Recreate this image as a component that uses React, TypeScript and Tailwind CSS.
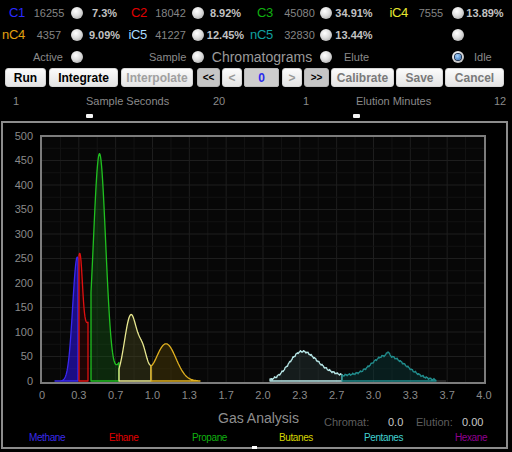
import type { ReactNode } from 'react'

type Comp = { label: string; color: string; num: string; pct: string }

const ROW1: Comp[] = [
  { label: 'C1', color: '#2a2aff', num: '16255', pct: '7.3%' },
  { label: 'C2', color: '#e00000', num: '18042', pct: '8.92%' },
  { label: 'C3', color: '#10b010', num: '45080', pct: '34.91%' },
  { label: 'iC4', color: '#e8e830', num: '7555', pct: '13.89%' },
]

const ROW2: Comp[] = [
  { label: 'nC4', color: '#e0a010', num: '4357', pct: '9.09%' },
  { label: 'iC5', color: '#a8dcff', num: '41227', pct: '12.45%' },
  { label: 'nC5', color: '#10a0a0', num: '32830', pct: '13.44%' },
  { label: '', color: '', num: '', pct: '' },
]

const X_LABELS = ['0', '0.3', '0.7', '1.0', '1.3', '1.7', '2.0', '2.3', '2.7', '3.0', '3.3', '3.7', '4.0']
const Y_LABELS = ['500', '450', '400', '350', '300', '250', '200', '150', '100', '50', '0']

const LEGEND = [
  { name: 'Methane', color: 'text-[#3a2ae8]', w: 'w-[80px]' },
  { name: 'Ethane', color: 'text-[#e00000]', w: 'w-[83px]' },
  { name: 'Propane', color: 'text-[#10b010]', w: 'w-[87px]' },
  { name: 'Butanes', color: 'text-[#d4d400]', w: 'w-[85px]' },
  { name: 'Pentanes', color: 'text-[#40d0d0]', w: 'w-[91px]' },
  { name: 'Hexane', color: 'text-[#900090]', w: 'w-[50px]' },
]

// chart helpers (page pixel coordinates)
const BASE = 381
const Y = (v: number) => BASE - v * 0.49
const g = (x: number, c: number, a: number, sl: number, sr = sl) => {
  const s = x < c ? sl : sr
  return a * Math.exp(-((x - c) ** 2) / (2 * s * s))
}
const noise = (x: number) => Math.sin(x * 1.7) * 1.3 + Math.sin(x * 4.1 + 1) * 0.9

function area(x0: number, x1: number, f: (x: number) => number) {
  let d = `M${x0},${BASE}`
  for (let x = x0; x <= x1 + 0.001; x += 0.5) {
    d += `L${x.toFixed(1)},${Y(Math.max(0, f(x))).toFixed(1)}`
  }
  return d + `L${x1},${BASE}Z`
}

const PEAKS = [
  { x0: 55, x1: 78, stroke: '#3a28f0', fill: '#2a12d8', op: 0.6, f: (x: number) => g(x, 77.3, 253, 4.6) },
  {
    x0: 79, x1: 88, stroke: '#e01010', fill: '#800000', op: 0.2,
    f: (x: number) => 105 * Math.exp(-((x - 80.3) ** 2) / (2 * 2.2 * 2.2)) + 118 + 0.9 * (x - 86.5) ** 2,
  },
  { x0: 91, x1: 119, stroke: '#20c020', fill: '#145a14', op: 0.4, f: (x: number) => g(x, 99.5, 464, 6.2) + g(x, 123, 45, 5.5) },
  {
    x0: 119, x1: 151, stroke: '#e8e890', fill: '#44441c', op: 0.45,
    f: (x: number) => g(x, 131, 135, 6.5) + g(x, 143, 45, 4) + g(x, 166, 76, 10),
  },
  { x0: 151, x1: 200, stroke: '#e0b020', fill: '#4a3a05', op: 0.5, f: (x: number) => g(x, 166, 76, 10) + g(x, 143, 45, 4) },
  {
    x0: 270, x1: 342, stroke: '#b8e8e8', fill: '#304444', op: 0.35,
    f: (x: number) => g(x, 302, 60, 13, 16) + g(x, 340, 10, 15) + noise(x),
  },
  {
    x0: 342, x1: 436, stroke: '#218c8c', fill: '#0a3434', op: 0.5,
    f: (x: number) => g(x, 386, 52, 16, 20) + g(x, 345, 10, 12) + g(x, 388, 8, 1.2) + noise(x + 3),
  },
]

export default function App() {
  return (
    <div className="w-[512px] h-[452px] overflow-hidden bg-black font-['Liberation_Sans',Arial,sans-serif]">
      {/* component table */}
      <div className="grid grid-cols-[27px_44px_12px_43px_23px_43px_12px_43px_32px_41px_12px_44px_34px_42px_12px_40px] auto-rows-[22px] items-center pt-[2px]">
        {[ROW1, ROW2].map((row, ri) =>
          row.map((c, i) => (
            <CompCells key={`${ri}-${i}`} c={c} wide={i === 2} last={i === 3} />
          )),
        )}
        {/* third row */}
        <div />
        <div className="pr-[8px] text-right text-[11px] text-[#8a8a8a]">Active</div>
        <Cell><Radio /></Cell>
        <div />
        <div />
        <div className="pr-[9px] text-right text-[11px] text-[#8a8a8a]">Sample</div>
        <Cell><Radio /></Cell>
        <div className="col-span-3 text-center text-[14px] text-[#9a9a9a]">Chromatograms</div>
        <Cell><Radio /></Cell>
        <div className="pl-[12px] text-[11px] text-[#8a8a8a]">Elute</div>
        <div />
        <div />
        <Cell><Radio on /></Cell>
        <div className="pl-[10px] text-[11px] text-[#8a8a8a]">Idle</div>
      </div>

      {/* buttons */}
      <div className="flex h-[19px]">
        <Btn className="ml-[5px] w-[41px] text-black">Run</Btn>
        <Btn className="ml-[3px] w-[69px] text-black">Integrate</Btn>
        <Btn className="ml-[3px] w-[72px] text-[#a0a0a0]">Interpolate</Btn>
        <Btn dark className="ml-[4px] w-[23px] text-[10px] text-black">&lt;&lt;</Btn>
        <Btn className="ml-[2px] w-[20px] text-[10px] text-[#9a9a9a]">&lt;</Btn>
        <div className="ml-[2px] flex w-[35px] items-center justify-center rounded-[2px] border border-[#b8b8b8] bg-[#cdcdcd] text-[12px] font-bold text-[#2a2aee]">
          0
        </div>
        <Btn className="ml-[3px] w-[20px] text-[10px] text-[#9a9a9a]">&gt;</Btn>
        <Btn dark className="ml-[2px] w-[25px] text-[10px] text-black">&gt;&gt;</Btn>
        <Btn className="ml-[2px] w-[63px] text-[#7a7a7a]">Calibrate</Btn>
        <Btn className="ml-[2px] w-[47px] text-[#7a7a7a]">Save</Btn>
        <Btn className="ml-[2px] w-[59px] text-[#7a7a7a]">Cancel</Btn>
      </div>

      {/* sliders */}
      <div className="mt-[7px] flex h-[14px] items-center text-[11px] leading-[14px] text-[#8a8a8a]">
        <div className="flex w-[256px] pl-[13px]">
          <span className="w-[73px]">1</span>
          <span className="w-[127px]">Sample Seconds</span>
          <span>20</span>
        </div>
        <div className="flex pl-[47px]">
          <span className="w-[53px]">1</span>
          <span className="w-[138px]">Elution Minutes</span>
          <span>12</span>
        </div>
      </div>
      <div className="mt-[6px] flex h-[4px]">
        <div className="ml-[86px] w-[7px] rounded-[1px] bg-[#f4f4f4]" />
        <div className="ml-[260px] w-[7px] rounded-[1px] bg-[#f4f4f4]" />
      </div>

      {/* chart */}
      <div className="relative mt-[3px] ml-[1px] h-[328px] w-[507px] border-2 border-[#8c8c8c]">
        <div className="flex pt-[12px]">
          <div className="flex h-[249px] w-[37px] flex-col items-end justify-between pt-[1px] pb-[3px] pr-[7px]">
            {Y_LABELS.map((l) => (
              <div key={l} className="flex h-0 items-center text-[11px] text-[#8a8a8a]">
                {l}
              </div>
            ))}
          </div>
          <Chart />
        </div>
        <div className="mt-[4px] ml-[39px] flex h-[14px] w-[442px] justify-between">
          {X_LABELS.map((l) => (
            <div key={l} className="flex w-0 justify-center text-[11px] leading-[14px] text-[#8a8a8a]">
              {l}
            </div>
          ))}
        </div>
        <div className="mt-[7px] flex items-start pl-[215px]">
          <span className="w-[106px] text-[14px] leading-[18px] text-[#8e8e8e]">Gas Analysis</span>
          <span className="mt-[6px] w-[64px] text-[11px] leading-[14px] text-[#5e5e5e]">Chromat:</span>
          <span className="mt-[6px] w-[28px] text-[11px] leading-[14px] text-[#c8c8c8]">0.0</span>
          <span className="mt-[6px] w-[46px] text-[11px] leading-[14px] text-[#5e5e5e]">Elution:</span>
          <span className="mt-[6px] text-[11px] leading-[14px] text-[#c8c8c8]">0.00</span>
        </div>
        <div className="mt-[3px] flex pl-[26px]">
          {LEGEND.map((l) => (
            <span key={l.name} className={`${l.w} ${l.color} text-[10px] leading-[12px] tracking-[-0.4px]`}>
              {l.name}
            </span>
          ))}
        </div>
        <div className="absolute bottom-[-2px] left-[249px] h-[3px] w-[5px] bg-white" />
      </div>
    </div>
  )
}

function CompCells({ c, wide, last }: { c: Comp; wide: boolean; last: boolean }) {
  return (
    <>
      <div
        className={`${wide ? 'pr-[6px]' : 'pr-[2px]'} text-right text-[13px] leading-[16px] tracking-[-0.3px]`}
        style={{ color: c.color }}
      >
        {c.label}
      </div>
      <div className="text-center text-[11px] text-[#858585]">{c.num}</div>
      <Cell>
        <Radio />
      </Cell>
      <div className={`${last ? 'pl-[2px]' : ''} text-center text-[11px] font-bold text-[#c2c2c2]`}>{c.pct}</div>
    </>
  )
}

function Cell({ children }: { children: ReactNode }) {
  return <div className="flex justify-center">{children}</div>
}

function Radio({ on = false }: { on?: boolean }) {
  return (
    <span className="flex h-[12px] w-[12px] items-center justify-center rounded-full bg-[radial-gradient(circle_at_40%_35%,#ffffff_0%,#dedede_45%,#9a9a9a_100%)]">
      {on && (
        <span className="h-[6px] w-[6px] rounded-full bg-[radial-gradient(circle_at_40%_35%,#a8d4ff,#1f5fa8)] ring-1 ring-[#1a3050]" />
      )}
    </span>
  )
}

function Btn({
  children,
  className,
  dark = false,
}: {
  children: ReactNode
  className: string
  dark?: boolean
}) {
  return (
    <button
      type="button"
      className={
        'flex items-center justify-center rounded-[3px] border font-bold leading-none ' +
        (dark
          ? 'border-[#b4b4b4] bg-[#c6c6c6] '
          : 'border-[#d6d6d6] bg-[linear-gradient(#fbfbfb,#e4e4e4)] text-[12px] ') +
        className
      }
    >
      {children}
    </button>
  )
}

function Chart() {
  const vx = Array.from({ length: 23 }, (_, i) => 42 + ((i + 1) * 442) / 24)
  const hy = Array.from({ length: 19 }, (_, i) => (i + 1) * 25)
  return (
    <svg width={446} height={249} viewBox="40 135 446 249" className="block">
      <rect x={41} y={136} width={444} height={247} fill="#070707" />
      {vx.map((x, i) => (
        <line key={'v' + i} x1={x} x2={x} y1={137} y2={382} stroke={i % 2 === 1 ? '#1e1e1e' : '#141414'} strokeWidth={1} />
      ))}
      {hy.map((v) => (
        <line key={'h' + v} x1={42} x2={484} y1={Y(v)} y2={Y(v)} stroke={v % 50 === 0 ? '#1e1e1e' : '#131313'} strokeWidth={1} />
      ))}
      <line x1={436} x2={446} y1={BASE} y2={BASE} stroke="#3a3a3a" strokeWidth={1.2} />
      {PEAKS.map((p, i) => (
        <path
          key={i}
          d={area(p.x0, p.x1, p.f)}
          fill={p.fill}
          fillOpacity={p.op}
          stroke={p.stroke}
          strokeWidth={1.3}
          strokeLinejoin="round"
        />
      ))}
      <rect x={41} y={136} width={444} height={247} fill="none" stroke="#7c7c7c" strokeWidth={2} />
    </svg>
  )
}
